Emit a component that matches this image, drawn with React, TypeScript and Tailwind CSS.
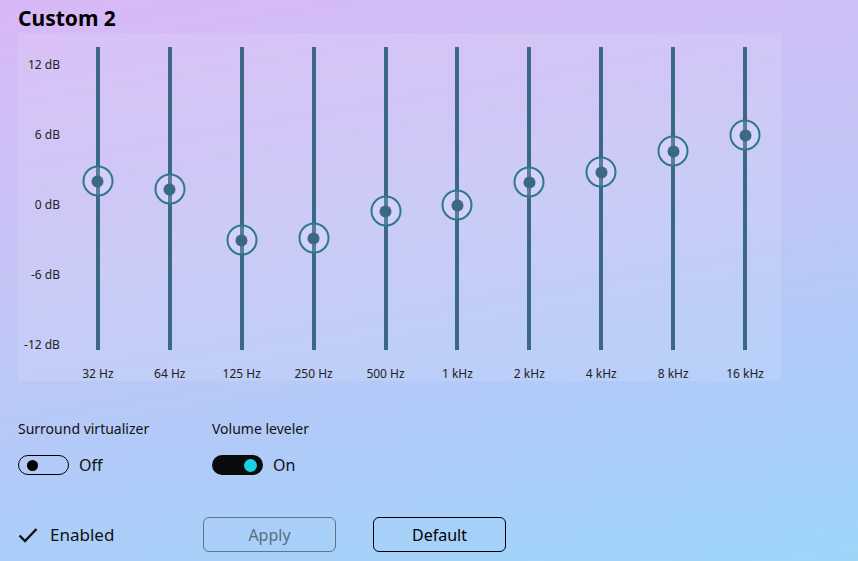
import React from 'react';

const bands = [
  { label: '32 Hz', y: 181 },
  { label: '64 Hz', y: 189 },
  { label: '125 Hz', y: 240 },
  { label: '250 Hz', y: 238 },
  { label: '500 Hz', y: 211 },
  { label: '1 kHz', y: 205 },
  { label: '2 kHz', y: 182 },
  { label: '4 kHz', y: 172 },
  { label: '8 kHz', y: 151 },
  { label: '16 kHz', y: 135 },
];

const scale = ['12 dB', '6 dB', '0 dB', '-6 dB', '-12 dB'];

const Band: React.FC<{ label: string; y: number }> = ({ label, y }) => (
  <div className="relative w-[72px] h-full">
    <div className="absolute left-1/2 -translate-x-1/2 top-[14px] h-[303px] w-[4px] bg-[#3c6888]" />
    {/* thumb, y is the centre in page coords */}
    <div
      className="absolute left-1/2 -translate-x-1/2 -translate-y-1/2 w-[31px] h-[31px] rounded-full border-2 border-[#2f7690] bg-white/15 flex items-center justify-center"
      style={{ top: y - 33 }}
    >
      <div className="w-[12px] h-[12px] rounded-full bg-[#3c6888]" />
    </div>
    <div className="absolute left-0 right-0 top-[333px] text-center text-[12px] leading-4 text-[#222]">{label}</div>
  </div>
);

export default function App() {
  return (
    <div className="w-[858px] h-[561px] overflow-hidden bg-[linear-gradient(170deg,#d8b8f6_0%,#c5c5f6_40%,#b0cbf8_70%,#9dd6f8_100%)] px-[18px] font-['Noto_Sans',sans-serif] text-[#111]">
      <h1 className="pt-[4px] text-[21px] leading-[28px] font-bold text-black">Custom 2</h1>

      {/* Equalizer panel */}
      <div className="mt-[1px] flex w-[763px] h-[348px] bg-white/10">
        <div className="w-[44px] pt-[24px] pr-[2px] flex flex-col items-end gap-[54px] text-[12px] leading-4 text-[#222]">
          {scale.map((s) => (
            <div key={s}>{s}</div>
          ))}
        </div>
        {bands.map((b) => (
          <Band key={b.label} label={b.label} y={b.y} />
        ))}
      </div>

      {/* Toggles */}
      <div className="mt-[38px] flex gap-[60px]">
        <div className="w-[134px]">
          <div className="text-[14px] leading-5">Surround virtualizer</div>
          <div className="mt-[16px] flex items-center gap-[10px]">
            <div className="w-[51px] h-[20px] rounded-full border-[1.5px] border-black flex items-center pl-[8px]">
              <div className="w-[11px] h-[11px] rounded-full bg-black" />
            </div>
            <span className="text-[16px] leading-5">Off</span>
          </div>
        </div>
        <div>
          <div className="text-[14px] leading-5">Volume leveler</div>
          <div className="mt-[16px] flex items-center gap-[10px]">
            <div className="w-[51px] h-[20px] rounded-full bg-[#0b0b0d] flex items-center justify-end pr-[6px]">
              <div className="w-[13px] h-[13px] rounded-full bg-[#16d2e4]" />
            </div>
            <span className="text-[16px] leading-5">On</span>
          </div>
        </div>
      </div>

      {/* Bottom actions */}
      <div className="mt-[42px] flex items-center">
        <div className="w-[185px] flex items-center gap-[12px]">
          <svg width="20" height="16" viewBox="0 0 20 16" fill="none">
            <path d="M1.5 8.5 L7 14 L18.5 2" stroke="#111" strokeWidth="2.4" />
          </svg>
          <span className="text-[17px] leading-6">Enabled</span>
        </div>
        <button className="w-[133px] h-[35px] rounded-[6px] border border-[#627385] text-[16px] text-[#5d6c7c]">
          Apply
        </button>
        <button className="ml-[37px] w-[133px] h-[35px] rounded-[6px] border border-black text-[16px] text-black">
          Default
        </button>
      </div>
    </div>
  );
}
